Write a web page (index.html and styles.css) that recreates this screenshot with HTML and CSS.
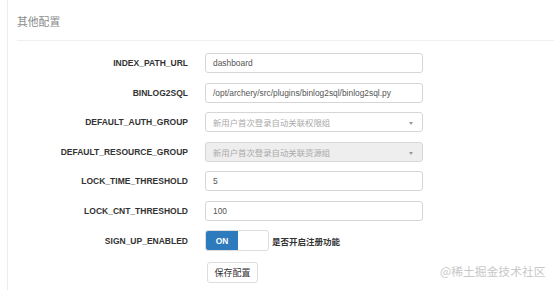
FILE: index.html
```html
<!DOCTYPE html>
<html lang="zh-CN">
<head>
    <meta charset="UTF-8">
    <title>其他配置</title>
    <link rel="stylesheet" href="styles.css">
</head>
<body>
    <div class="panel">
        <div class="panel-title">其他配置</div>
        <div class="divider"></div>

        <form class="config-form">
            <div class="row">
                <label class="label">INDEX_PATH_URL</label>
                <div class="field">dashboard</div>
            </div>
            <div class="row">
                <label class="label">BINLOG2SQL</label>
                <div class="field">/opt/archery/src/plugins/binlog2sql/binlog2sql.py</div>
            </div>
            <div class="row">
                <label class="label">DEFAULT_AUTH_GROUP</label>
                <div class="field select placeholder">新用户首次登录自动关联权限组<span class="caret"></span></div>
            </div>
            <div class="row">
                <label class="label">DEFAULT_RESOURCE_GROUP</label>
                <div class="field select placeholder disabled">新用户首次登录自动关联资源组<span class="caret"></span></div>
            </div>
            <div class="row">
                <label class="label">LOCK_TIME_THRESHOLD</label>
                <div class="field">5</div>
            </div>
            <div class="row">
                <label class="label">LOCK_CNT_THRESHOLD</label>
                <div class="field">100</div>
            </div>
            <div class="row">
                <label class="label">SIGN_UP_ENABLED</label>
                <div class="switch">
                    <span class="switch-on">ON</span>
                    <span class="switch-off"></span>
                </div>
                <span class="switch-text">是否开启注册功能</span>
            </div>
            <div class="row actions">
                <button type="button" class="btn">保存配置</button>
            </div>
        </form>
    </div>

    <div class="watermark">@稀土掘金技术社区</div>
</body>
</html>
```

FILE: styles.css
```css
body {
    margin: 0;
    background-color: #fff;
    font-family: "Liberation Sans", Arial, "Noto Sans CJK SC", sans-serif;
    color: #333;
    overflow: hidden;
}

.panel {
    margin-left: 7px;
    border-left: 1px solid #ececec;
    height: 290px;
    padding-left: 9px;
    box-sizing: border-box;
}

.panel-title {
    padding-top: 16px;
    font-size: 10.8px;
    line-height: 13px;
    color: #8a8a8a;
}

.divider {
    margin-top: 11px;
    border-top: 1px solid #f0f0f0;
}

.config-form {
    padding-top: 12px;
}

.row {
    display: flex;
    align-items: center;
    height: 20px;
    margin-bottom: 9.6px;
}

.label {
    width: 171px;
    text-align: right;
    font-size: 8.5px;
    font-weight: bold;
    color: #333;
    margin-right: 17px;
    flex-shrink: 0;
}

.field {
    width: 218px;
    height: 20px;
    box-sizing: border-box;
    border: 1px solid #d6d6d6;
    border-radius: 3px;
    padding-left: 7px;
    display: flex;
    align-items: center;
    font-size: 8.4px;
    color: #555;
    position: relative;
}

.placeholder {
    color: #aaa;
}

.disabled {
    background-color: #eee;
}

.caret {
    position: absolute;
    right: 9px;
    top: 9px;
    width: 0;
    height: 0;
    border-left: 2.5px solid transparent;
    border-right: 2.5px solid transparent;
    border-top: 3px solid #999;
}

.switch {
    display: flex;
    width: 64px;
    height: 21px;
    box-sizing: border-box;
    border: 1px solid #ddd;
    border-radius: 3px;
    overflow: hidden;
}

.switch-on {
    width: 32px;
    background-color: #2d7bbd;
    color: #fff;
    font-size: 8.4px;
    font-weight: bold;
    display: flex;
    align-items: center;
    justify-content: center;
}

.switch-off {
    flex: 1;
}

.switch-text {
    margin-left: 3px;
    font-size: 8.5px;
    font-weight: bold;
    color: #333;
}

.actions {
    margin-top: 11px;
    padding-left: 190px;
    height: 21px;
}

.btn {
    width: 51px;
    height: 21px;
    background-color: #fff;
    border: 1px solid #ddd;
    border-radius: 3px;
    font-family: "Liberation Serif", "Noto Sans CJK SC", serif;
    font-size: 9px;
    color: #333;
    padding: 0;
}

.watermark {
    position: absolute;
    left: 440px;
    top: 262px;
    font-size: 11.8px;
    color: #c8c8c8;
    font-family: "Noto Sans CJK SC", sans-serif;
}
```
